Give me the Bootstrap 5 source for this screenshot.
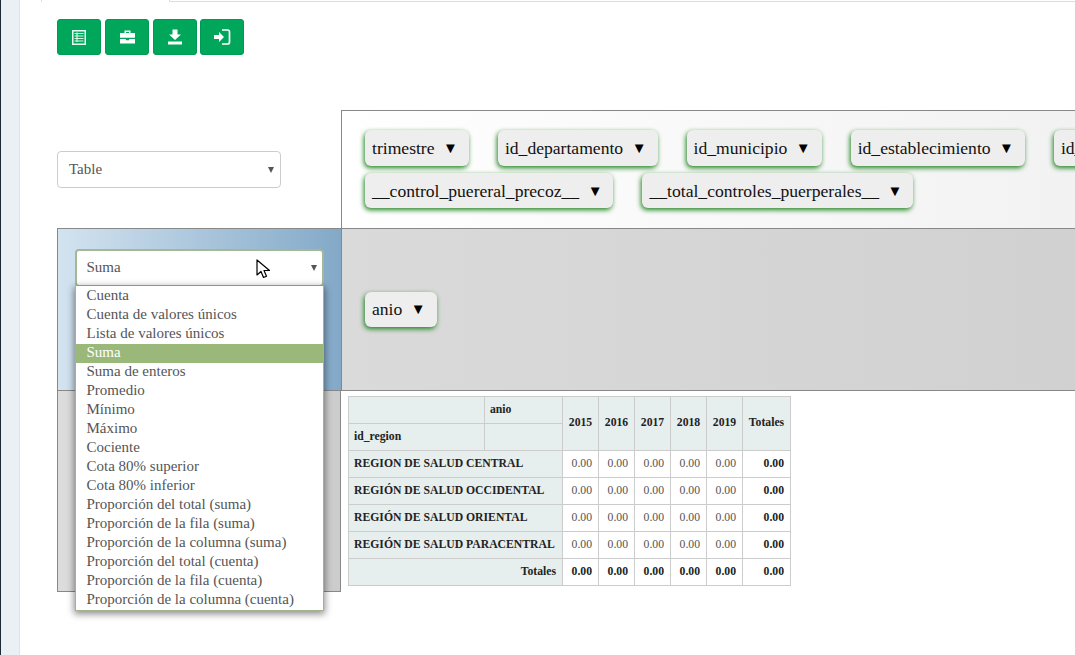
<!DOCTYPE html>
<html lang="es"><head><meta charset="utf-8"><title>Pivot</title>
<link rel="stylesheet" href="https://cdn.jsdelivr.net/npm/bootstrap@5.3.0/dist/css/bootstrap.min.css">
<style>
html,body{height:100%;overflow:hidden;background:#fff}
body{font-family:"Liberation Serif",serif;color:#555;font-size:14px}
.shell{height:655px;width:1075px;overflow:hidden}
.edge-dark{width:1px;background:#1d2b36}
.edge-light{width:19px;background:#ebf0f5;border-right:1px solid #dfe3e8}
.main-area{width:1055px;position:relative;overflow:hidden}
.tabline{height:2px}
.tab-start{width:21px}
.tab-gap{width:129px;border-left:1px solid #ddd;border-right:1px solid #ddd}
.tab-rest{flex:1;border-bottom:1px solid #ddd}
.tools{margin:17px 0 0 37px;gap:4px}
.tool{width:44px;height:36px;background:#00a65a;border:1px solid #009a52;border-radius:3px;display:flex;align-items:center;justify-content:center;padding:0}
.tool:last-child{margin-left:-1px}
.pivot{margin:55px 0 0 37px;display:grid;grid-template-columns:284px 800px;grid-template-rows:118px 162px 202px}
.cell-sel{display:flex;align-items:center;padding-top:1px}
.renderer{width:224px;height:37px;border:1px solid #ccc;border-radius:4px;padding:0 11px;font-size:15px;position:relative;display:flex;align-items:center;background:#fff;color:#555}
.tri{position:absolute;right:6px;top:50%;margin-top:-3px;width:0;height:0;border-left:3px solid transparent;border-right:3px solid transparent;border-top:6px solid #555}
.cell-unused{border:1px solid #888;border-bottom:0;background:linear-gradient(to right,#fff,#f1f1f1);padding:19px 0 0 23px;overflow:hidden}
.chip-row{display:flex;white-space:nowrap;margin-bottom:7px}
.chip{display:inline-flex;align-items:center;height:36px;background:#eee;border-radius:6px;padding:0 6px 0 7px;margin-right:29px;font-size:17.6px;color:#111;box-shadow:-1px 2px 5px 0 rgba(20,125,20,.95);flex:none}
.chip-row.second .chip,.cell-col .chip{height:35px}
.chip-row.second .chip{padding-top:1px}
.arrow{margin-left:8.500px;margin-right:5px;font-size:15px;color:#000}
.cell-agg{border:1px solid #888;border-right:0;border-bottom:0;background:linear-gradient(to right,#d3e3f0,#83a9c8);padding:20px 0 0 17px;position:relative}
.cell-col{border:1px solid #888;border-bottom:0;background:linear-gradient(to right,#dadada,#d0d0d0);display:flex;align-items:center;padding:0 0 0 23px}
.cell-row{border:1px solid #888;background:linear-gradient(to right,#dcdcdc,#ccc)}
.cell-out{border-top:1px solid #888;padding:5px 0 0 7px}
.agg-select{width:249px;height:38px;background:#fff;border:2px solid #a3b894;border-radius:4px;padding:0 0 2px 9.500px;position:relative;display:flex;align-items:center;font-size:15px;color:#555}
.agg-select .tri{right:5px}
.agg-list{position:absolute;left:17px;top:57px;width:249px;background:#fff;border:1px solid #9fb48f;border-top:0;box-shadow:0 2px 7px 1px rgba(0,0,0,.45);list-style:none;margin:0;padding:1px 0 0;z-index:5;font-size:15px;line-height:17px;color:#555}
.agg-list li{padding:0 10.500px;height:19px;white-space:nowrap}
.agg-list li.picked{background:#9ab87a;color:#fff}
.pointer{position:absolute;left:198px;top:30px;z-index:6}
.pvt{border-collapse:collapse;table-layout:fixed;width:442px;font-size:11.700px;color:#333}
.pvt th,.pvt td{border:1px solid #ccc;line-height:16px;height:27px;padding:0 6px 1px 5px;white-space:nowrap}
.pvt th{background:#e6eeee;font-weight:700;color:#222}
.pvt td{text-align:right;background:#fff;color:#555}
.pvt td.tot{font-weight:700;color:#222}
.pvt th.head{padding:0 6px 0 5px}
.pvt th.anio{vertical-align:top;padding-top:5px}
.pvt th.yr{text-align:center;padding:0 0 2px}
.pvt th.rgt{text-align:right}
</style></head><body>
<div class="shell d-flex">
<div class="edge-dark"></div><div class="edge-light"></div>
<div class="main-area">
<div class="d-flex tabline"><div class="tab-start"></div><div class="tab-gap"></div><div class="tab-rest"></div></div>
<div class="d-flex tools">
<button class="tool btn" aria-label="Lista"><svg width="16" height="17" viewBox="0 0 16 17"><rect x="1" y="1" width="14" height="15" fill="#e8fff4"/><path d="M2.500 2.500h11v12h-11z" fill="#00a65a"/><path d="M3.500 4.500h9M3.500 7h9M3.500 9.500h9M3.500 12h9M6 3.500v9.500" stroke="#d8fbe8" stroke-width="1.200" fill="none"/></svg></button>
<button class="tool btn" aria-label="Maletin"><svg width="17" height="16" viewBox="0 0 17 16"><path d="M5.500 4V1.500h6V4h4.500v4.800H1V4zM7 4h3V3H7z" fill="#fff" fill-rule="evenodd"/><path d="M1 10h5.800v1.200h3.400V10H16v4.500H1z" fill="#fff"/></svg></button>
<button class="tool btn" aria-label="Descargar"><svg width="16" height="16" viewBox="0 0 16 16"><path d="M5.500 0.500h5v5h3.500L8 11 2 5.500h3.500z" fill="#fff"/><path d="M1 12.500h14v3H1z" fill="#fff"/></svg></button>
<button class="tool btn" aria-label="Entrar"><svg width="18" height="16" viewBox="0 0 18 16"><path d="M1 6h5V3l5 5-5 5v-3H1z" fill="#fff"/><path d="M9 1h5.500a2 2 0 0 1 2 2v10a2 2 0 0 1-2 2H9" fill="none" stroke="#fff" stroke-width="1.700"/></svg></button>
</div>
<div class="pivot">
<div class="cell-sel"><div class="renderer">Table<span class="tri"></span></div></div>
<div class="cell-unused">
<div class="chip-row"><span class="chip">trimestre<span class="arrow">▼</span></span><span class="chip">id_departamento<span class="arrow">▼</span></span><span class="chip">id_municipio<span class="arrow">▼</span></span><span class="chip">id_establecimiento<span class="arrow">▼</span></span><span class="chip">id_region<span class="arrow">▼</span></span></div>
<div class="chip-row second"><span class="chip">__control_puereral_precoz__<span class="arrow">▼</span></span><span class="chip">__total_controles_puerperales__<span class="arrow">▼</span></span></div>
</div>
<div class="cell-agg">
<div class="agg-select">Suma<span class="tri"></span></div>
<ul class="agg-list">
<li>Cuenta</li><li>Cuenta de valores únicos</li><li>Lista de valores únicos</li><li class="picked">Suma</li><li>Suma de enteros</li><li>Promedio</li><li>Mínimo</li><li>Máximo</li><li>Cociente</li><li>Cota 80% superior</li><li>Cota 80% inferior</li><li>Proporción del total (suma)</li><li>Proporción de la fila (suma)</li><li>Proporción de la columna (suma)</li><li>Proporción del total (cuenta)</li><li>Proporción de la fila (cuenta)</li><li>Proporción de la columna (cuenta)</li>
</ul>
<svg class="pointer" width="15" height="21" viewBox="0 0 15 21"><path d="M1 1v15l4-3.500 2.500 6 3-1.300L8 11.500h5.500z" fill="#fff" stroke="#000" stroke-width="1.200" stroke-linejoin="round"/></svg>
</div>
<div class="cell-col"><span class="chip">anio<span class="arrow">▼</span></span></div>
<div class="cell-row"></div>
<div class="cell-out">
<table class="pvt">
<colgroup><col style="width:136px"><col style="width:78px"><col style="width:36px"><col style="width:36px"><col style="width:36px"><col style="width:36px"><col style="width:36px"><col style="width:48px"></colgroup>
<tr><th class="head"></th><th class="head anio">anio</th><th class="yr" rowspan="2">2015</th><th class="yr" rowspan="2">2016</th><th class="yr" rowspan="2">2017</th><th class="yr" rowspan="2">2018</th><th class="yr" rowspan="2">2019</th><th class="yr" rowspan="2">Totales</th></tr>
<tr><th class="head">id_region</th><th class="head"></th></tr>
<tr><th colspan="2">REGION DE SALUD CENTRAL</th><td>0.00</td><td>0.00</td><td>0.00</td><td>0.00</td><td>0.00</td><td class="tot">0.00</td></tr>
<tr><th colspan="2">REGIÓN DE SALUD OCCIDENTAL</th><td>0.00</td><td>0.00</td><td>0.00</td><td>0.00</td><td>0.00</td><td class="tot">0.00</td></tr>
<tr><th colspan="2">REGIÓN DE SALUD ORIENTAL</th><td>0.00</td><td>0.00</td><td>0.00</td><td>0.00</td><td>0.00</td><td class="tot">0.00</td></tr>
<tr><th colspan="2">REGIÓN DE SALUD PARACENTRAL</th><td>0.00</td><td>0.00</td><td>0.00</td><td>0.00</td><td>0.00</td><td class="tot">0.00</td></tr>
<tr><th class="rgt" colspan="2">Totales</th><td class="tot">0.00</td><td class="tot">0.00</td><td class="tot">0.00</td><td class="tot">0.00</td><td class="tot">0.00</td><td class="tot">0.00</td></tr>
</table>
</div>
</div>
</div>
</div>
</body></html>
